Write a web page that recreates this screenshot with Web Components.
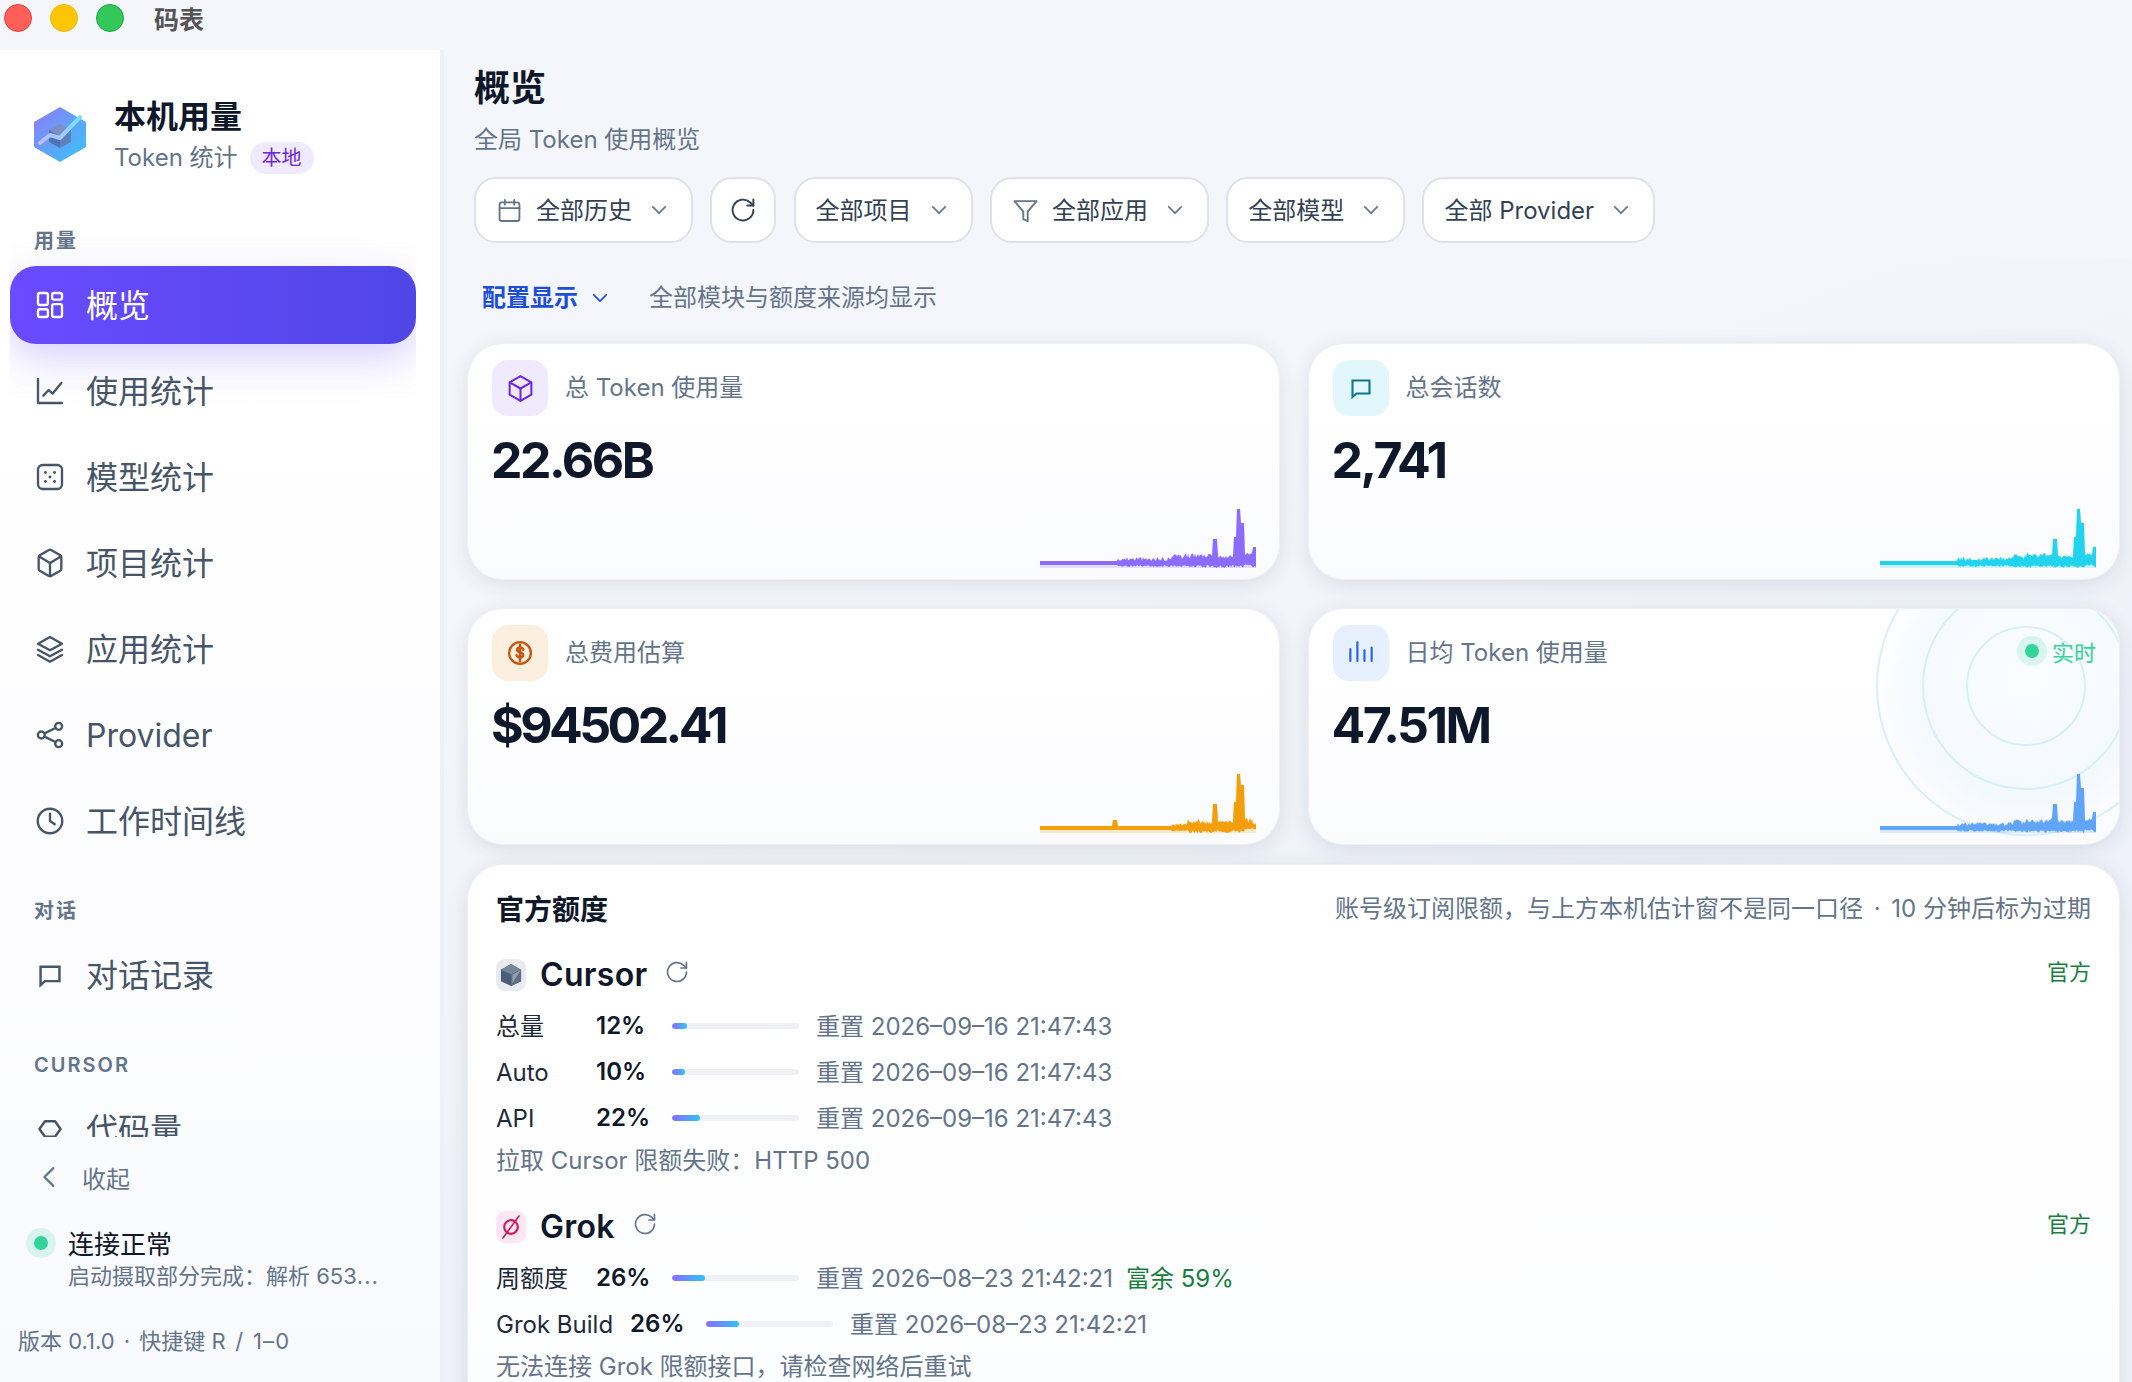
<!DOCTYPE html>
<html lang="zh-CN"><head><meta charset="utf-8"><title>码表</title>
<style>
html,body{margin:0;padding:0;background:#f4f6fb}
body{font-family:Inter,"Noto Sans CJK SC",sans-serif}
</style></head>
<body>
<mb-app>
  <mb-titlebar slot="top">码表</mb-titlebar>
  <mb-sidebar slot="side">
    <mb-brand slot="brand" badge="本地"><span slot="title">本机用量</span><span slot="sub">Token 统计</span></mb-brand>
    <mb-nav-label>用量</mb-nav-label>
    <mb-nav-item icon="dash" active>概览</mb-nav-item>
    <mb-nav-item icon="chart">使用统计</mb-nav-item>
    <mb-nav-item icon="dice">模型统计</mb-nav-item>
    <mb-nav-item icon="box">项目统计</mb-nav-item>
    <mb-nav-item icon="layers">应用统计</mb-nav-item>
    <mb-nav-item icon="share" latin>Provider</mb-nav-item>
    <mb-nav-item icon="clock">工作时间线</mb-nav-item>
    <mb-nav-label class="later">对话</mb-nav-label>
    <mb-nav-item icon="chat">对话记录</mb-nav-item>
    <mb-nav-label class="later">CURSOR</mb-nav-label>
    <mb-nav-item icon="hex">代码量</mb-nav-item>
    <mb-side-foot slot="foot">
      <span slot="collapse">收起</span>
      <span slot="status">连接正常</span>
      <span slot="detail">启动摄取部分完成：解析 653<span style="letter-spacing:1px">...</span></span>
      <span slot="version">版本 0.1.0 <span style="margin:0 3px">·</span> 快捷键 R <span style="margin:0 3.5px">/</span> <span style="letter-spacing:1.2px">1–0</span></span>
    </mb-side-foot>
  </mb-sidebar>
  <mb-main slot="main">
    <mb-head slot="head" sub="全局 Token 使用概览">概览</mb-head>
    <mb-toolbar slot="head">
      <mb-select icon="calendar">全部历史</mb-select>
      <mb-icon-button></mb-icon-button>
      <mb-select>全部项目</mb-select>
      <mb-select icon="filter">全部应用</mb-select>
      <mb-select>全部模型</mb-select>
      <mb-select>全部 Provider</mb-select>
    </mb-toolbar>
    <mb-config><span slot="link">配置显示</span>全部模块与额度来源均显示</mb-config>
    <mb-stats>
      <mb-stat-card icon="cube" tile="#efeafe" ink="#6d28d9" spark="#8b6cff" shape="a" isize="23"><span slot="label">总 Token 使用量</span>22.66B</mb-stat-card>
      <mb-stat-card icon="chat" tile="#e2f7fc" ink="#0e7490" spark="#22d3ee" shape="b" isize="18"><span slot="label">总会话数</span>2,741</mb-stat-card>
      <mb-stat-card icon="coin" tile="#fdefe0" ink="#c2590f" spark="#f59e0b" shape="c" isize="20"><span slot="label">总费用估算</span><span style="letter-spacing:-3.6px">$94502.41</span></mb-stat-card>
      <mb-stat-card icon="bars" tile="#e7f0fe" ink="#2563eb" spark="#60a5fa" shape="d" isize="24"><span slot="label">日均 Token 使用量</span>47.51M<mb-radar slot="over"></mb-radar><mb-live slot="over">实时</mb-live></mb-stat-card>
    </mb-stats>
    <mb-quota-card>
      <span slot="title">官方额度</span>
      <span slot="note">账号级订阅限额，与上方本机估计窗不是同一口径 <span style="margin:0 4px">·</span> 10 分钟后标为过期</span>
      <mb-provider logo="cursor" name="Cursor" tag="官方">
        <mb-quota-row label="总量" pct="12" reset="重置 2026–09–16 21:47:43"></mb-quota-row>
        <mb-quota-row label="Auto" latin pct="10" reset="重置 2026–09–16 21:47:43"></mb-quota-row>
        <mb-quota-row label="API" latin pct="22" reset="重置 2026–09–16 21:47:43"></mb-quota-row>
        <mb-quota-note>拉取 Cursor 限额失败：HTTP 500</mb-quota-note>
      </mb-provider>
      <mb-provider logo="grok" name="Grok" tag="官方">
        <mb-quota-row label="周额度" pct="26" reset="重置 2026–08–23 21:42:21" extra="富余 59%"></mb-quota-row>
        <mb-quota-row label="Grok Build" latin pct="26" reset="重置 2026–08–23 21:42:21"></mb-quota-row>
        <mb-quota-note>无法连接 Grok 限额接口，请检查网络后重试</mb-quota-note>
      </mb-provider>
    </mb-quota-card>
  </mb-main>
</mb-app>
<script>
const ICONS={
 dash:'<rect x="3" y="3" width="7.4" height="9" rx="1.4"/><rect x="13.6" y="3" width="7.4" height="5" rx="1.4"/><rect x="13.6" y="11.4" width="7.4" height="9.6" rx="1.4"/><rect x="3" y="15.2" width="7.4" height="5.8" rx="1.4"/>',
 chart:'<path d="M3 3v18h18"/><path d="M7 15.5l4-4.2 3 2.6L20.5 6"/>',
 dice:'<rect x="3" y="3" width="18" height="18" rx="3.5"/><g fill="currentColor" stroke="none"><circle cx="8.6" cy="8.6" r="1.1"/><circle cx="15.4" cy="8.6" r="1.1"/><circle cx="12" cy="12" r="1.1"/><circle cx="8.6" cy="15.4" r="1.1"/><circle cx="15.4" cy="15.4" r="1.1"/></g>',
 box:'<path d="M20.5 7.6a1.6 1.6 0 0 0-.8-1.4l-6.9-3.9a1.6 1.6 0 0 0-1.6 0L4.3 6.2a1.6 1.6 0 0 0-.8 1.4v8.8a1.6 1.6 0 0 0 .8 1.4l6.9 3.9a1.6 1.6 0 0 0 1.6 0l6.9-3.9a1.6 1.6 0 0 0 .8-1.4z"/><path d="M3.9 7.2 12 12l8.1-4.8"/><path d="M12 21.5V12"/>',
 cube:'<path d="M20.5 7.2 12 2.4 3.5 7.2v9.6l8.5 4.8 8.5-4.8z"/><path d="M3.9 7.4 12 12l8.1-4.6"/><path d="M12 21.5V12"/>',
 layers:'<path d="M12 3 3 8l9 5 9-5z"/><path d="m3 12.5 9 5 9-5"/><path d="m3 16.5 9 5 9-5"/>',
 share:'<circle cx="5.5" cy="12" r="2.6"/><circle cx="18.5" cy="5.5" r="2.6"/><circle cx="18.5" cy="18.5" r="2.6"/><path d="m7.9 10.8 8.2-4.1"/><path d="m7.9 13.2 8.2 4.1"/>',
 clock:'<circle cx="12" cy="12" r="9.2"/><path d="M12 6.5V12l3.6 2.4"/>',
 chat:'<path d="M3.500 4.500h17v13H7.500l-4 3.500z" stroke-linejoin="miter"/>',
 hex:'<path d="M7.500 5h9l5 7-5 7h-9l-5-7z"/>',
 calendar:'<rect x="3.500" y="5" width="17" height="16" rx="2"/><path d="M8 3v4"/><path d="M16 3v4"/><path d="M3.500 10h17"/>',
 filter:'<path d="M21.500 4h-19l7.600 9v6.400l3.800 1.800V13z"/>',
 refresh:'<path d="M20.500 12a8.500 8.500 0 1 1-2.600-6.100L20.500 8.400"/><path d="M20.500 3.400v5h-5"/>',
 chevron:'<path d="m5 8.500 7 7 7-7"/>',
 back:'<path d="m15 4-8 8 8 8"/>',
 coin:'<circle cx="12" cy="12" r="9.800"/><path d="M15 9c-.5-1.300-1.600-2-3-2-1.500 0-2.600.8-2.600 2 0 2.800 5.400 1.700 5.400 4.900 0 1.300-1.200 2.100-2.800 2.100-1.400 0-2.500-.6-3.100-1.800" stroke-width="2.300"/><path d="M12 4.500v15" stroke-width="2.300"/>',
 bars:'<path d="M4 9v9"/><path d="M9.300 4v14"/><path d="M14.600 10v8"/><path d="M20 8v10"/>'
};
function def(name,css,html,extra){
  const cls=class extends HTMLElement{
    constructor(){super();this.attachShadow({mode:'open'});}
    connectedCallback(){
      const a=k=>this.getAttribute(k)||'';
      this.shadowRoot.innerHTML='<style>'+css+'</style>'+(typeof html==='function'?html(a,this):html);
      if(extra)extra(this);
    }
  };
  customElements.define(name,cls);
}
def('mb-icon',':host{display:inline-flex;flex:none}svg{display:block;overflow:visible;fill:none;stroke:currentColor;stroke-linecap:round;stroke-linejoin:round}',
 a=>{const s=a('size')||24;return `<svg width="${s}" height="${s}" viewBox="3 3 18 18" stroke-width="${a('sw')||1.7}">${ICONS[a('name')]||''}</svg>`});

def('mb-app',':host{display:flex;flex-direction:column;width:2132px;height:1382px;overflow:hidden;background:#f4f6fb;color:#0f172a;font-family:Inter,"Noto Sans CJK SC",sans-serif}.row{display:flex;flex:1;min-height:0}',
 '<slot name="top"></slot><div class="row"><slot name="side"></slot><slot name="main"></slot></div>');

def('mb-titlebar',':host{display:flex;flex:none;height:50px;box-sizing:border-box;padding:4px;background:#f4f6fb}i{width:28px;height:28px;box-sizing:border-box;border-radius:50%;margin-right:18px;border:1px solid}.r{background:#ff5f57;border-color:#e8403a}.y{background:#fdc503;border-color:#efb800}.g{background:#34c759;border-color:#12ad3c}b{margin-left:12px;font-size:25px;line-height:32px;font-weight:700;color:#555}',
 '<i class="r"></i><i class="y"></i><i class="g"></i><b><slot></slot></b>');

def('mb-sidebar',':host{display:flex;flex-direction:column;flex:none;width:444px;box-sizing:border-box;background:linear-gradient(180deg,#fff 0,#fff 20%,#f9fafd 100%);border-right:4px solid #eef0f7}.nav{margin:0 24px 0 10px;height:910px;overflow:hidden;display:flex;flex-direction:column;gap:0}.nav ::slotted(mb-nav-item){margin-bottom:8px}',
 '<slot name="brand"></slot><div class="nav"><slot></slot></div><slot name="foot"></slot>');

def('mb-brand',':host{display:flex;flex:none;height:177px;box-sizing:border-box;padding:55px 0 0 34px;gap:28px}.logo{width:52px;height:57px;margin-top:1px;flex:none}.t{font-size:32px;line-height:44px;font-weight:700;color:#0f172a;margin-top:-10px}.s{display:flex;align-items:center;gap:12px;font-size:24px;line-height:34px;color:#64748b;margin-top:2px}.b{font-size:20px;line-height:32px;height:32px;padding:0 12px;border-radius:16px;background:#efeafe;color:#6d28d9}',
 a=>`<svg class="logo" viewBox="0 0 52 57"><defs><linearGradient id="h" x1="0" y1="0" x2="1" y2="1"><stop offset="0" stop-color="#8f7bf9"/><stop offset="1" stop-color="#35c6f6"/></linearGradient><linearGradient id="l" x1="0" y1="1" x2="1" y2="0"><stop offset="0" stop-color="#c4b8fb"/><stop offset="1" stop-color="#6fe6fb"/></linearGradient></defs><polygon points="26,1 52,16 52,41 26,56 0,41 0,16" fill="url(#h)"/><polygon points="15,24 26,18 37,24 26,30" fill="#7c8fc7"/><polygon points="15,24 26,30 26,42 15,36" fill="#4f74b4"/><polygon points="26,30 37,24 37,36 26,42" fill="#5b82bf"/><polyline points="6,37 16,29 26,32 46,11" fill="none" stroke="url(#l)" stroke-width="4" stroke-linecap="round" stroke-linejoin="round"/></svg><div><div class="t"><slot name="title"></slot></div><div class="s"><slot name="sub"></slot><span class="b">${a('badge')}</span></div></div>`);

def('mb-nav-label',':host{display:block;flex:none;padding-left:24px;font-size:20px;line-height:28px;font-weight:600;letter-spacing:2px;color:#64748b;margin-bottom:11px}:host(.later){margin-top:29px}','<slot></slot>');

def('mb-nav-item',':host{display:flex;flex:none;align-items:center;height:78px;box-sizing:border-box;padding-left:28px;gap:24px;border-radius:26px;font-size:32px;color:#475569}:host([active]){color:#fff;background:linear-gradient(90deg,#6a4bff,#4f46e5);box-shadow:0 14px 40px rgba(99,75,255,.26)}span{padding-bottom:5px}:host([latin]) span{padding-bottom:0}.i{display:flex;align-items:center;justify-content:center;width:24px}',
 a=>{const small=a('icon')==='chat'||a('icon')==='hex';return `<div class="i"><mb-icon name="${a('icon')}" size="${small?20:24}" sw="${small?2.2:1.75}"></mb-icon></div><span><slot></slot></span>`});

def('mb-side-foot',':host{display:block;flex:none;padding-top:18px}.c{display:flex;align-items:center;height:44px;padding-left:40px;gap:22px;font-size:24px;color:#64748b}.st{position:relative;margin-top:28px;padding-left:68px}.dot{position:absolute;left:34px;top:9px;width:14px;height:14px;border-radius:50%;background:#34d399;box-shadow:0 0 0 8px rgba(52,211,153,.16)}.n{font-size:26px;line-height:36px;color:#0f172a}.d{font-size:22px;line-height:27px;color:#64748b;white-space:nowrap}.v{margin:37px 0 0 18px;font-size:22px;line-height:28px;color:#64748b}',
 `<div class="c"><mb-icon name="back" size="20" sw="2"></mb-icon><span><slot name="collapse"></slot></span></div><div class="st"><span class="dot"></span><div class="n"><slot name="status"></slot></div><div class="d"><slot name="detail"></slot></div></div><div class="v"><slot name="version"></slot></div>`);

def('mb-main',':host{display:block;flex:1;min-width:0;overflow:hidden}.h{padding:13px 12px 0 30px;height:207px;box-sizing:border-box}.c{padding:25px 12px 0 23px;background:linear-gradient(160deg,#f4f6fb 25%,#eef1f9 60%,#f0f3fb)}',
 '<div class="h"><slot name="head"></slot></div><div class="c"><slot></slot></div>');

def('mb-head',':host{display:block}h1{margin:0;font-size:36px;line-height:50px;font-weight:700;color:#0f172a}p{margin:11px 0 0;font-size:24px;line-height:32px;color:#64748b}',
 a=>`<h1><slot></slot></h1><p>${a('sub')}</p>`);

def('mb-toolbar',':host{display:flex;gap:17.3px;margin-top:21px}','<slot></slot>');

const btn='height:66px;box-sizing:border-box;border:2px solid #dfe2e8;border-radius:22px;background:#fff;';
def('mb-select',':host{display:flex;align-items:center;'+btn+'padding:0 24px 0 20px;font-size:24px;color:#334155}.i{color:#64748b;margin:0 16px 0 3px}.ch{color:#64748b;margin-left:19px}span{padding-bottom:3px}',
 a=>`${a('icon')?`<mb-icon class="i" name="${a('icon')}" size="21" sw="1.6"></mb-icon>`:''}<span><slot></slot></span><mb-icon class="ch" name="chevron" size="16" sw="1.8"></mb-icon>`);
def('mb-icon-button',':host{display:flex;align-items:center;justify-content:center;width:66px;'+btn+'color:#334155}','<mb-icon name="refresh" size="22" sw="1.6"></mb-icon>');

def('mb-config',':host{display:flex;align-items:center;height:32px;padding-left:15px;font-size:24px;line-height:32px;color:#64748b;margin-bottom:29px}b{font-weight:700;color:#1d4ed8}.ch{color:#1d4ed8;margin:0 41px 0 14px}',
 '<b><slot name="link"></slot></b><mb-icon class="ch" name="chevron" size="16" sw="1.9"></mb-icon><span><slot></slot></span>');

def('mb-stats',':host{display:grid;grid-template-columns:1fr 1fr;gap:28px;grid-auto-rows:237px;margin-bottom:19px}','<slot></slot>');

function sparkPoly(shape){
  let s={a:13,b:77,c:41,d:29}[shape];
  const r=()=>{s=(s*16807)%2147483647;return s/2147483647};
  const top=[],bot=[];
  for(let x=0;x<=216;x++){
    const n=r(),m=r();
    let t=53,b=57;
    if(shape==='c'){
      if(x>=73&&x<=77)t=47;
      if(x>=132){t=53-n*2.5;b=57+m*1.5;}
      if(x>=148&&x<173){t=52-n*6;b=57+m*3.5;}
    }else{
      if(x>=78){t=53-n*4;b=57+m*2;}
      if(x>=130){t=52-n*4;b=57+m*2.5;}
      if(x>=134&&x<=141){t=46+n*3;}
      if(x>=145&&x<173){t=50-n*5;b=57+m*3;}
    }
    if(x>=173){t=50-n*2;b=57+m*3;}
    if(x>=173&&x<=177)t=31;
    if(x>=178&&x<=193){t=50-n*3;}
    if(x>=194&&x<=196)t=29;
    if(x>=197&&x<=200)t=1;
    if(x>=201&&x<=204)t=shape==='c'?12:15;
    if(x>=205&&x<=212){t=shape==='c'?44+n*6:48-n*3;b=56+m*2;}
    if(x>=213)t=shape==='c'?48+n*4:39;
    if(shape==='c'&&x>=205)b=55+m*2;
    top.push(x+','+t.toFixed(1));bot.unshift(x+','+b.toFixed(1));
  }
  return {top:top.join(' '),band:top.concat(bot).join(' ')};
}
def('mb-spark',':host{display:block;width:216px;height:60px;pointer-events:none}svg{display:block}',
 a=>{const p=sparkPoly(a('shape'));const c=a('color');
  return `<svg width="216" height="60" viewBox="0 0 216 60"><polygon points="0,60 ${p.top} 216,60" fill="${c}" opacity=".2"/><polygon points="${p.band}" fill="${c}"/></svg>`});

def('mb-stat-card',':host{display:block;position:relative;box-sizing:border-box;padding:16px 24px;border:1px solid #eef0f4;border-radius:36px;background:linear-gradient(180deg,#fff 0,#fff 20%,#fafbfd 100%);box-shadow:0 4px 20px rgba(30,41,59,.11);overflow:hidden}.top{position:relative;display:flex;align-items:center;gap:17px;font-size:24px;color:#64748b}.l{padding-bottom:5px}.t{display:flex;align-items:center;justify-content:center;width:56px;height:56px;border-radius:16px}.v{position:relative;margin:14px 0 0 -1px;font-size:50px;line-height:60px;font-weight:700;letter-spacing:-2.5px;color:#0f172a}mb-spark{position:absolute;right:23px;bottom:11px}',
 a=>`<slot name="over"></slot><div class="top"><span class="t" style="background:${a('tile')};color:${a('ink')}"><mb-icon name="${a('icon')}" size="${a('isize')}" sw="${a('icon')==='chat'||a('icon')==='coin'?2.100:1.600}"></mb-icon></span><span class="l"><slot name="label"></slot></span></div><div class="v"><slot></slot></div><mb-spark shape="${a('shape')}" color="${a('spark')}"></mb-spark>`);

def('mb-radar',':host{position:absolute;right:-57px;top:-73px;width:300px;height:300px;pointer-events:none}svg{display:block}',
 '<svg width="300" height="300" viewBox="0 0 300 300"><defs><radialGradient id="g"><stop offset="0" stop-color="#e8f4fd" stop-opacity=".2"/><stop offset=".75" stop-color="#e4f2fd" stop-opacity=".35"/><stop offset="1" stop-color="#e4f2fd" stop-opacity="0"/></radialGradient></defs><circle cx="150" cy="150" r="150" fill="url(#g)"/><g fill="none" stroke="#d9eefb" stroke-width="2"><circle cx="150" cy="150" r="59"/><circle cx="150" cy="150" r="103"/><circle cx="150" cy="150" r="149"/></g></svg>');

def('mb-live',':host{position:absolute;right:23px;top:27px;display:flex;align-items:center;gap:13px;height:30px;font-size:22px;color:#34d399}i{width:14px;height:14px;border-radius:50%;background:#34d399;box-shadow:0 0 0 8px rgba(52,211,153,.16)}','<i></i><span><slot></slot></span>');

def('mb-quota-card',':host{display:block;box-sizing:border-box;padding:23px 28px 40px;border:1px solid #eef0f4;border-radius:36px 36px 0 0;background:linear-gradient(180deg,#fff,#fcfdff);box-shadow:0 4px 20px rgba(30,41,59,.11)}.h{display:flex;align-items:center;justify-content:space-between;height:40px;margin-bottom:30px}b{font-size:28px;font-weight:700;color:#0f172a}.n{font-size:24px;color:#64748b;padding-bottom:3px}.p{display:flex;flex-direction:column;gap:30px}',
 '<div class="h"><b><slot name="title"></slot></b><span class="n"><slot name="note"></slot></span></div><div class="p"><slot></slot></div>');

const LOGOS={
 cursor:'<svg width="22" height="24" viewBox="0 0 24 26"><polygon points="12,1 23,7.200 23,19.800 12,25 1,19.800 1,7.200" fill="#4b5e78"/><polygon points="12,1 23,7.200 12,12.500 1,7.200" fill="#77869a"/><polygon points="23,7.200 23,19.800 12,25 12,12.500" fill="#5d6e85"/><polygon points="23,7.200 13.500,12.800 13.500,22" fill="#f3f4f6" opacity=".35"/></svg>',
 grok:'<svg width="24" height="28" viewBox="0 0 24 28" fill="none" stroke="#cf1d5b" stroke-width="2.200" stroke-linecap="round"><circle cx="12" cy="14" r="6.800"/><path d="M20 3 4 25" stroke-width="1.600"/></svg>'
};
const TILE={cursor:'#e9ebf0',grok:'#fce7f3'};
def('mb-provider',':host{display:block}.h{display:flex;align-items:center;height:34px;margin-bottom:11px}.t{display:flex;align-items:center;justify-content:center;width:30px;height:32px;border-radius:9px;overflow:hidden;flex:none}.n{margin-left:14px;font-size:32px;line-height:34px;font-weight:600;letter-spacing:.3px;color:#0f172a}.r{margin:-6px 0 0 20px;color:#64748b}.o{margin:-10px 0 0 auto;font-size:22px;color:#15803d}',
 a=>`<div class="h"><span class="t" style="background:${TILE[a('logo')]}">${LOGOS[a('logo')]}</span><span class="n">${a('name')}</span><mb-icon class="r" name="refresh" size="20" sw="1.500"></mb-icon><span class="o">${a('tag')}</span></div><slot></slot>`);

def('mb-quota-row',':host{display:flex;align-items:center;height:46px;gap:17px;font-size:24px;color:#1e293b;white-space:nowrap}.l{min-width:83px;padding-bottom:4px}:host([latin]) .l{padding-bottom:0}.p{min-width:59px;font-weight:600;color:#0f172a;padding-bottom:1px}.b{width:127px;height:6px;border-radius:3px;background:#eff1f4;overflow:hidden;flex:none;margin-bottom:1px}.b i{display:block;height:100%;border-radius:3px;background:linear-gradient(90deg,#8b6cff,#2fc4f5)}.r{color:#64748b;padding-bottom:4px}.x{color:#15803d;margin-left:-4px;padding-bottom:4px}',
 a=>`<span class="l">${a('label')}</span><span class="p">${a('pct')}%</span><span class="b"><i style="width:${Math.max(a('pct')*1.27,12)}px"></i></span><span class="r">${a('reset')}</span>${a('extra')?`<span class="x">${a('extra')}</span>`:''}`);

def('mb-quota-note',':host{display:block;font-size:24px;line-height:39px;color:#64748b}','<slot></slot>');
</script>
</body></html>
